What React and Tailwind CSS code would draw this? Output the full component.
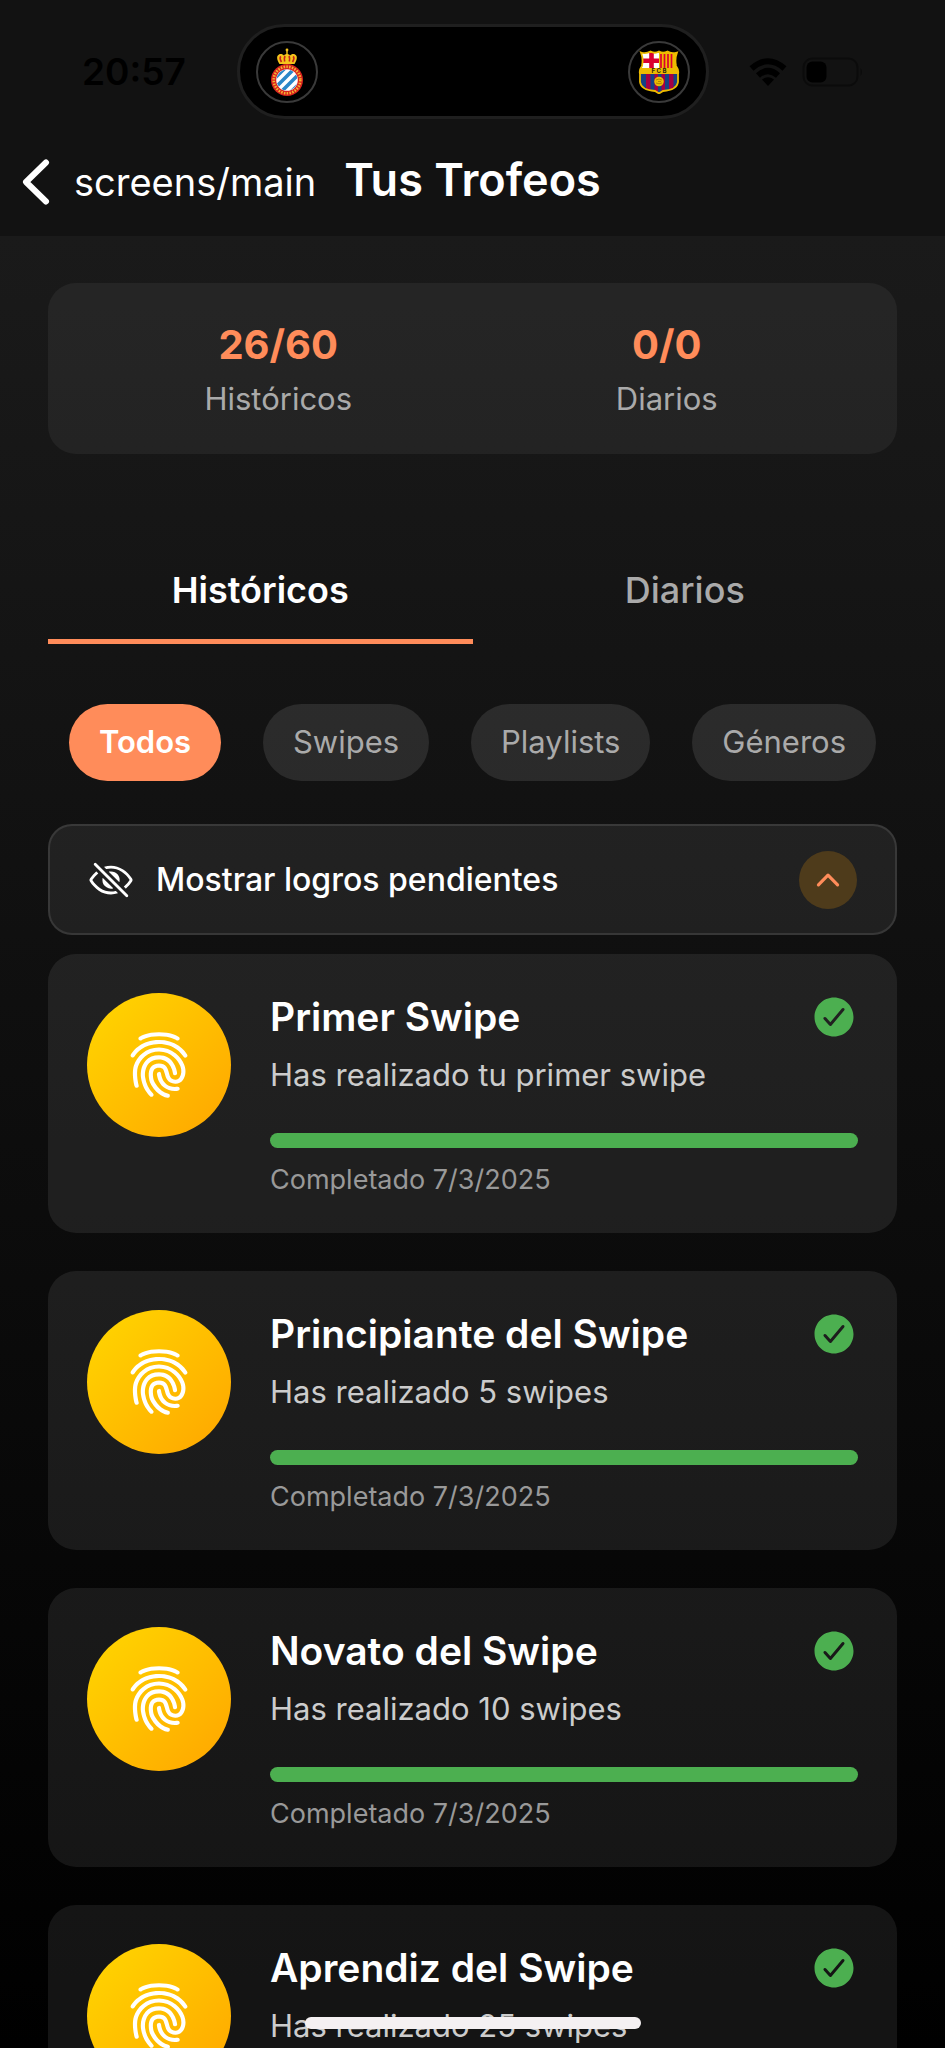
import {
  IoFingerPrint,
  IoEyeOffOutline,
  IoCheckmarkCircle,
  IoChevronUp,
} from "react-icons/io5";

const achievements = [
  { title: "Primer Swipe", text: "Has realizado tu primer swipe", date: "7/3/2025" },
  { title: "Principiante del Swipe", text: "Has realizado 5 swipes", date: "7/3/2025" },
  { title: "Novato del Swipe", text: "Has realizado 10 swipes", date: "7/3/2025" },
  { title: "Aprendiz del Swipe", text: "Has realizado 25 swipes", date: "7/3/2025" },
];

const stats = [
  { label: "Históricos", value: "26/60" },
  { label: "Diarios", value: "0/0" },
];

const filters = ["Todos", "Swipes", "Playlists", "Géneros"];

function EspanyolCrest() {
  return (
    <svg viewBox="0 0 36 50" className="h-[50px] w-9" role="img" aria-label="RCD Espanyol">
      <circle cx="18" cy="3" r="1.4" fill="#f5c51c" />
      <path d="M17.3 3h1.4v4h-1.4z" fill="#f5c51c" />
      <path d="M10.500 17C8 13 7 9 10 7.500c2-1 4 0 5 1 1-2 5-2 6 0 1-1 3-2 5-1 3 1.500 2 5.500-.5 9.500z" fill="#f5c51c" />
      <path d="M12 9.500c-1.500 1-1 3 .5 5.500M16 9c-1 2-.8 4-.3 5.500M20 9c1 2 .8 4 .3 5.500M24 9.500c1.500 1 1 3-.5 5.500" fill="none" stroke="#c8251c" strokeWidth="1.700" />
      <circle cx="18" cy="33" r="16" fill="#d8231f" />
      <circle cx="18" cy="33" r="13.300" fill="none" stroke="#f3b530" strokeWidth="2.600" strokeDasharray="1.500 1.300" />
      <circle cx="18" cy="33" r="10.800" fill="#fff" />
      <clipPath id="espanyol-inner">
        <circle cx="18" cy="33" r="10.500" />
      </clipPath>
      <g clipPath="url(#espanyol-inner)" stroke="#2b87c8" strokeWidth="3.600">
        <path d="M2 35 20 17M5 42 27 20M9 48 33 24M17 50 35 32" />
      </g>
    </svg>
  );
}

function BarcelonaCrest() {
  const shield = "M3 2.500Q8 4 12.500 1.500 17 4 21 1.500 25 4 29.500 1.500 33 4 39 2.500 36.500 9 38 16 41 20 40 24V32Q39 40 25 41L21 43.500 17 41Q3 40 2 32V24Q1 20 4 16 5.500 9 3 2.500Z";
  return (
    <svg viewBox="0 0 42 44" className="h-11 w-[42px]" role="img" aria-label="FC Barcelona">
      <clipPath id="barcelona-shield">
        <path d={shield} />
      </clipPath>
      <g clipPath="url(#barcelona-shield)">
        <path d="M0 0h42v44H0z" fill="#edbb00" />
        <path d="M4 3h17v15H4z" fill="#fff" />
        <path d="M11.200 3h4.600v15h-4.600zM4 8.500h17v4.500H4z" fill="#db0030" />
        <path d="M23 4v14M26.500 4v14M30 4v14M33.500 4v14" stroke="#db0030" strokeWidth="1.700" />
        <path d="M0 24h42v20H0z" fill="#154284" />
        <path d="M8 24h4.500v20H8zM16.500 24H20v20h-3.500zM23.500 24H27v20h-3.500zM31 24h4.500v20H31z" fill="#a50044" />
      </g>
      <path d={shield} fill="none" stroke="#edbb00" strokeWidth="1.800" />
      <text x="21" y="23.200" textAnchor="middle" fontSize="6" fontWeight="700" fontFamily="Inter, sans-serif" fill="#2b2410">F C B</text>
      <circle cx="21" cy="31.500" r="4.800" fill="#edbb00" />
      <path d="M18 30q3-2 6 0M18 33q3 1.500 6 0M20 31.500h3" fill="none" stroke="#a07800" strokeWidth=".8" />
    </svg>
  );
}

function StatusBar() {
  return (
    <div className="grid grid-cols-[1fr_472px_1fr] items-center pt-6">
      <span className="pl-[82px] text-[37px] leading-[48px] font-semibold text-black">20:57</span>
      <div className="flex h-[95px] items-center justify-between rounded-full border-3 border-[#1f1f1f] bg-black px-4">
        <span className="flex size-[62px] items-center justify-center rounded-full border-2 border-[#3a3a3a]">
          <EspanyolCrest />
        </span>
        <span className="flex size-[62px] items-center justify-center rounded-full border-2 border-[#3a3a3a]">
          <BarcelonaCrest />
        </span>
      </div>
      <div className="flex items-center gap-[15px] pl-10">
        <svg viewBox="0 0 38 28" className="h-7 w-[38px]" role="img" aria-label="Wi-Fi">
          <path d="M2.500 10.500Q19-4 35.500 10.500" fill="none" stroke="#000" strokeWidth="6" />
          <path d="M9 17.500Q19 8.500 29 17.500" fill="none" stroke="#000" strokeWidth="6" />
          <path d="M13 21.500Q19 17 25 21.500L19 28Z" fill="#000" />
        </svg>
        <svg viewBox="0 0 62 30" className="h-[30px] w-[62px]" role="img" aria-label="Batería">
          <rect x="1.500" y="1.500" width="54" height="27" rx="9" fill="none" stroke="#0b0b0b" strokeWidth="2" />
          <rect x="4.500" y="4.500" width="20" height="21" rx="6" fill="#000" />
          <path d="M58.500 11q3 4 0 8z" fill="#0b0b0b" />
        </svg>
      </div>
    </div>
  );
}

function AchievementCard({ title, text, date }) {
  return (
    <li className="flex items-start gap-[39px] rounded-[28px] bg-white/8 px-[39px] pt-[39px] pb-[37px]">
      <span className="flex size-36 shrink-0 items-center justify-center rounded-full bg-linear-to-br from-[#ffd700] to-[#ffa500]">
        <IoFingerPrint className="size-[70px] text-white" />
      </span>
      <div className="min-w-0 flex-1">
        <div className="flex h-12 items-center justify-between">
          <h2 className="text-[39px] leading-[48px] font-semibold">{title}</h2>
          <IoCheckmarkCircle className="size-12 text-[#4caf50]" />
        </div>
        <p className="mt-4 text-[31px] leading-9 text-[#cccccc]">{text}</p>
        <div className="mt-10 h-[15px] rounded-full bg-[#4caf50]" />
        <p className="mt-4 text-[27px] leading-8 text-[#999999]">Completado {date}</p>
      </div>
    </li>
  );
}

export default function App() {
  return (
    <div className="flex h-screen flex-col bg-[#121212] font-[Inter,sans-serif] text-white">
      <header className="shrink-0 bg-[#121212] pb-[26px]">
        <StatusBar />
        <div className="flex items-center pt-[35px] pl-[22px]">
          <a href="#main" className="flex items-center gap-6 text-[38px] leading-[56px]">
            <svg viewBox="0 0 28 46" className="h-[46px] w-7" fill="none" stroke="currentColor" strokeWidth="6" strokeLinecap="round" strokeLinejoin="round">
              <path d="M24 3.500 4 23l20 19.500" />
            </svg>
            screens/main
          </a>
          <h1 className="ml-7 pb-1 text-[45px] leading-[52px] font-semibold">Tus Trofeos</h1>
        </div>
      </header>
      <main id="main" className="min-h-0 flex-1 overflow-y-auto bg-linear-to-b/srgb from-[#1a1a1a] to-black px-12 pt-[47px] [scrollbar-width:none]">
        <dl className="grid h-[171px] grid-cols-2 rounded-[28px] bg-white/5 px-9 pt-[34px] text-center">
          {stats.map(({ label, value }) => (
            <div key={label} className="flex flex-col-reverse justify-end gap-[2px]">
              <dt className="text-[31px] leading-[48px] text-[#aaaaaa]">{label}</dt>
              <dd className="text-[40px] leading-[56px] font-bold text-[#ff8c5a]">{value}</dd>
            </div>
          ))}
        </dl>
        <div role="tablist" className="mt-[82px] grid grid-cols-2 text-[36px]">
          <button role="tab" aria-selected="true" className="h-[108px] border-b-5 border-[#ff8c5a] pt-1 font-semibold">Históricos</button>
          <button role="tab" aria-selected="false" className="h-[108px] border-b-5 border-transparent pt-1 font-medium text-[#aaaaaa]">Diarios</button>
        </div>
        <div className="mt-[60px] flex justify-around text-[31px]">
          {filters.map((name, i) => (
            <button key={name} className={i === 0 ? "h-[77px] rounded-full bg-[#ff8c5a] px-[30px] font-semibold" : "h-[77px] rounded-full bg-white/10 px-[30px] text-[#aaaaaa]"}>
              {name}
            </button>
          ))}
        </div>
        <button className="mt-[43px] flex h-[111px] w-full items-center rounded-[24px] border-2 border-white/10 bg-white/7 px-[38px] text-[32px] font-medium">
          <IoEyeOffOutline className="size-[46px]" />
          <span className="ml-[22px]">Mostrar logros pendientes</span>
          <span className="ml-auto flex size-[58px] items-center justify-center rounded-full bg-[#4e3b1b] text-[#ff8c5a]">
            <IoChevronUp className="size-[34px]" />
          </span>
        </button>
        <ul className="mt-[19px] flex flex-col gap-[38px] pb-12">
          {achievements.map((item) => (
            <AchievementCard key={item.title} {...item} />
          ))}
        </ul>
      </main>
      <div className="fixed bottom-[19px] left-1/2 h-3 w-[336px] -translate-x-1/2 rounded-full bg-[#f4f0f2]" />
    </div>
  );
}
